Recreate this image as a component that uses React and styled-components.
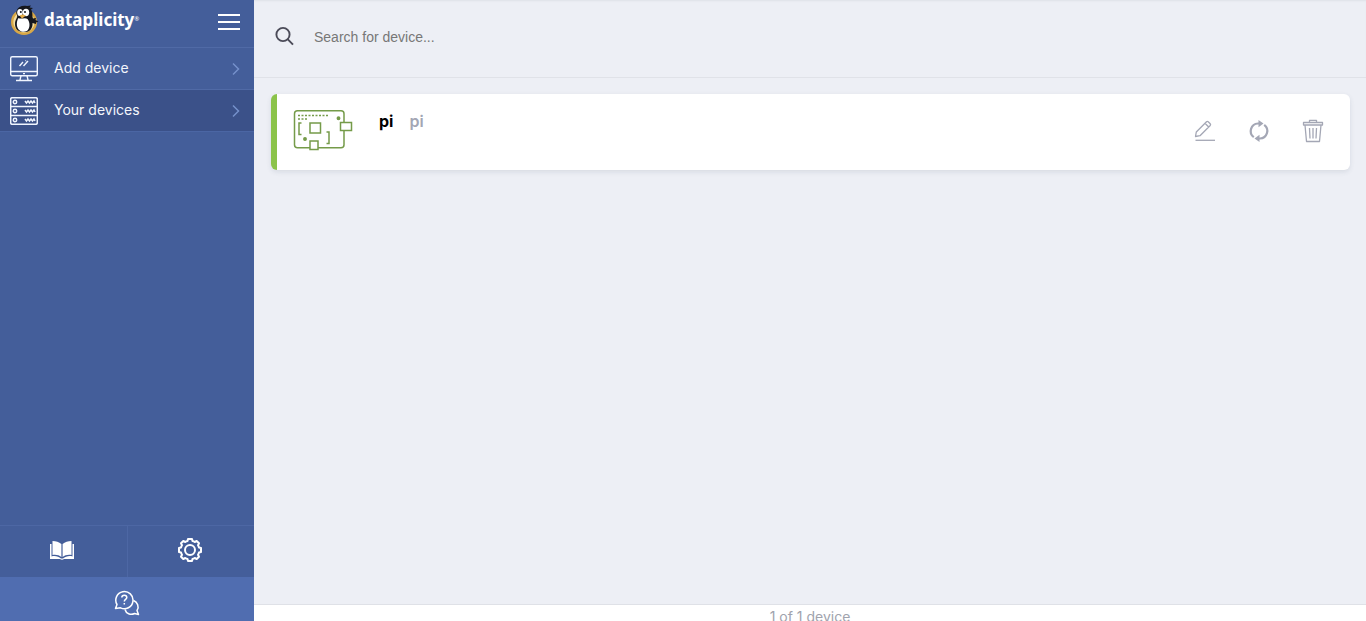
import { useState } from 'react';
import styled, { createGlobalStyle } from 'styled-components';

const GlobalStyle = createGlobalStyle`
  * {
    box-sizing: border-box;
  }
  body {
    margin: 0;
    font-family: Inter, "Liberation Sans", sans-serif;
    background-color: #edeff5;
  }
  button {
    border: 0;
    padding: 0;
    background: none;
    font-family: inherit;
    cursor: pointer;
  }
  svg {
    display: block;
    flex-shrink: 0;
  }
`

const Layout = styled.div`
  display: flex;
  height: 100vh;
  overflow: hidden;
`

const Sidebar = styled.aside`
  display: flex;
  flex-direction: column;
  flex: 0 0 254px;
  background-color: #445e9a;
`

const Brand = styled.div`
  display: flex;
  align-items: flex-start;
  justify-content: space-between;
  height: 47px;
  padding: 4px 14px 0 8px;
`

const Logo = styled.a`
  display: flex;
  align-items: center;
  gap: 4px;
  height: 32px;
  color: #fff;
  font-family: "Noto Sans", "Open Sans", sans-serif;
  font-size: 17px;
  font-weight: 700;
  line-height: 24px;
  text-decoration: none;
`

const Registered = styled.sup`
  font-size: 6px;
  line-height: 6px;
  font-weight: 400;
  vertical-align: 5px;
`

const MenuButton = styled.button`
  height: 36px;
`

const Nav = styled.nav`
  flex: 1;
`

const NavItem = styled.a`
  display: flex;
  align-items: center;
  gap: 16px;
  height: 42px;
  padding: 0 12px 0 10px;
  border-top: 1px solid #506aa6;
  background-color: ${props => props.$active ? '#3b5189' : 'transparent'};
  box-shadow: ${props => props.$active ? '0 1px #4b66a4' : 'none'};
  color: #f3f6fc;
  font-size: 14px;
  line-height: 20px;
  text-decoration: none;
`

const NavLabel = styled.span`
  flex: 1;
  padding-bottom: 2px;
`

const Tools = styled.div`
  display: flex;
  height: 52px;
  border-top: 1px solid #4d67a4;
`

const ToolButton = styled.button`
  display: flex;
  flex: 1;
  align-items: center;
  justify-content: center;
  padding: 0 2px 4px 0;

  & + & {
    border-left: 1px solid #4d67a4;
  }
`

const HelpButton = styled.button`
  display: flex;
  justify-content: center;
  height: 44px;
  padding-top: 13px;
  background-color: #506db0;
`

const Main = styled.main`
  display: flex;
  flex: 1;
  flex-direction: column;
  min-width: 0;
`

const SearchBar = styled.label`
  display: flex;
  align-items: center;
  gap: 20px;
  height: 78px;
  padding: 0 20px 6px;
  border-bottom: 1px solid #e0e2e8;
  box-shadow: inset 0 2px 2px -1px #dfe1e7;
`

const SearchInput = styled.input`
  flex: 1;
  border: 0;
  outline: 0;
  padding: 2px 0 0;
  background: none;
  color: #333;
  font-family: "Liberation Sans", Arial, sans-serif;
  font-size: 14px;

  &::placeholder {
    color: #777;
    opacity: 1;
  }
`

const Devices = styled.ul`
  flex: 1;
  margin: 0;
  padding: 16px 16px 16px 17px;
  list-style: none;
`

const Device = styled.li`
  display: flex;
  align-items: flex-start;
  height: 76px;
  padding: 0 26px 0 16px;
  border-left: 6px solid #8bc34a;
  border-radius: 6px;
  background-color: #fff;
  box-shadow: 0 2px 5px rgba(60, 70, 100, 0.12);
`

const Board = styled.svg`
  margin: 15px 26px 0 0;
`

const DeviceName = styled.a`
  display: flex;
  flex: 1;
  gap: 16px;
  padding-top: 17px;
  color: #000;
  font-size: 16px;
  font-weight: 700;
  line-height: 20px;
  text-decoration: none;
`

const DeviceType = styled.span`
  color: #a3a6b4;
  font-weight: 600;
`

const Actions = styled.div`
  display: flex;
  align-self: center;
  gap: 32px;
  padding-bottom: 2px;
`

const Footer = styled.footer`
  height: 17px;
  border-top: 1px solid #dfe1e7;
  background-color: #fff;
  color: #a0a3ad;
  font-size: 14px;
  line-height: 24px;
  text-align: center;
`

const PenguinIcon = () => (
  <svg width="32" height="32" viewBox="0 0 32 32">
    <circle cx="16" cy="18" r="11.800" fill="#f3dfa5" stroke="#d9a846" strokeWidth="2.400" />
    <path d="M9 6C10 3 14 1 19 2L23 1.500L21.500 3.500L25 4L23 5.500C25 8 24 12 25 14.500L28 14L27.500 16L30.500 17.500L28 18.500L28 20L24.500 19C25 25 21 28.500 16 28C10 28 7 25 7 20C7 15 10 14 9 11C8 9 8 8 9 6Z" fill="#15171d" />
    <path d="M10.500 14C13 15.500 17 13 19.500 15C22 18 22.500 24 19 27C15 29 10 27 9 22C8.500 19 9 16 10.500 14Z" fill="#fff" />
    <ellipse cx="12" cy="8.500" rx="2.800" ry="3.500" fill="#fff" />
    <ellipse cx="18" cy="8.500" rx="3.200" ry="3.700" fill="#fff" />
    <circle cx="12.800" cy="8" r="1" fill="#15171d" />
    <circle cx="17" cy="8" r="1" fill="#15171d" />
    <path d="M11.500 11.500L14.500 10.500L18 11.500L14 14.500Z" fill="#e9b04a" />
  </svg>
)

const BurgerIcon = () => (
  <svg width="22" height="16" viewBox="0 0 22 16" stroke="#fff" strokeWidth="2">
    <path d="M0 1H22M0 8H22M0 15H22" />
  </svg>
)

const MonitorIcon = () => (
  <svg width="28" height="28" viewBox="0 0 28 28" fill="none" stroke="#f0f5ff" strokeWidth="1.400">
    <rect x="0.700" y="1.700" width="26.600" height="19" rx="1.500" />
    <path d="M1 16.500H27M11 20.700L10 25M17 20.700L18 25M6 25.500H22M9.500 11L13 7M13.500 11L18 6M15.500 6L16 5.500" />
    <path d="M13 18.600H15" />
  </svg>
)

const ServerIcon = () => (
  <svg width="28" height="28" viewBox="0 0 28 28" fill="none" stroke="#f0f5ff" strokeWidth="1.500">
    <rect x="0.700" y="0.700" width="26.600" height="26.600" rx="1.500" />
    <path d="M1 9.500H27M1 18.500H27" />
    {[5, 14, 23].map(y => (
      <g key={y}>
        <circle cx="5" cy={y} r="1.700" />
        <path d={`M15 ${y - 1}L16.500 ${y + 1}L18 ${y - 1}L19.500 ${y + 1}L21 ${y - 1}L22.500 ${y + 1}L24 ${y - 1}L25 ${y + 1}`} />
      </g>
    ))}
  </svg>
)

const ChevronIcon = () => (
  <svg width="12" height="14" viewBox="0 0 12 14" fill="none" stroke="#7590cb" strokeWidth="1.500">
    <path d="M3 1.500L8.500 7L3 12.500" />
  </svg>
)

const BookIcon = () => (
  <svg width="26" height="22" viewBox="0 0 26 22">
    <path d="M1 5H2.500V17.500C6 16.500 9.500 17.500 12 19.500H14C16.500 17.500 20 16.500 23.500 17.500V5H25V20H15C14 21 12 21 11 20H1Z" fill="#fff" />
    <path d="M3.500 2C7 2 10 3 12.400 5V18C10 16 7 15.500 3.500 16Z" fill="#fff" />
    <path d="M22.500 2C19 2 16 3 13.600 5V18C16 16 19 15.500 22.500 16Z" fill="#fff" />
  </svg>
)

const GearIcon = () => (
  <svg width="26" height="26" viewBox="0 0 26 26" fill="none" stroke="#fff" strokeWidth="2" strokeLinejoin="round">
    <circle cx="13" cy="13" r="5" />
    <path d="M10.500 4L11 2H15L15.500 4Q16.700 4.300 17.700 5L19.700 4L22 6.300L21 8.300Q21.700 9.300 22 10.500L24 11V15L22 15.500Q21.700 16.700 21 17.700L22 19.700L19.700 22L17.700 21Q16.700 21.700 15.500 22L15 24H11L10.500 22Q9.300 21.700 8.300 21L6.300 22L4 19.700L5 17.700Q4.300 16.700 4 15.500L2 15V11L4 10.500Q4.300 9.300 5 8.300L4 6.300L6.300 4L8.300 5Q9.300 4.300 10.500 4Z" />
  </svg>
)

const HelpIcon = () => (
  <svg width="26" height="26" viewBox="0 0 26 26" fill="none" stroke="#fff" strokeWidth="1.500" strokeLinejoin="round">
    <path d="M1.500 18.500L3 14.500A8.600 8.600 0 1 1 6.500 17.800Z" />
    <path d="M19.500 10.500C23.500 12 25.500 17 23 20.500L24.500 24.500L20.500 23.500C16.500 25.500 12 23.500 11 19.500" />
    <path d="M7.800 7.500C7.800 4.500 12.800 4.500 12.800 7.500C12.800 9.500 10.300 9.300 10.300 11.500M10.300 13V14.600" />
  </svg>
)

const SearchIcon = () => (
  <svg width="20" height="20" viewBox="0 0 20 20" fill="none" stroke="#4b4b58" strokeWidth="1.900">
    <circle cx="9" cy="8.500" r="6.600" />
    <path d="M13.600 13.200L19 18.600" />
  </svg>
)

const BoardIcon = () => (
  <Board width="60" height="42" viewBox="0 0 60 42" fill="none" stroke="#759b49" strokeWidth="1.500">
    <rect x="1.500" y="1.700" width="49.500" height="37" rx="3" />
    <path d="M5 6.500H35M5 10H15" strokeDasharray="2 1.500" strokeWidth="1.300" />
    <rect x="17" y="14" width="10.500" height="10" />
    <path d="M8.500 14H6V25.500H8.500M33.500 23H36V34.500H33.500" />
    <rect x="47.500" y="13.500" width="11" height="8" fill="#fff" />
    <rect x="17" y="32" width="8" height="8.500" fill="#fff" />
    <circle cx="45.500" cy="9.300" r="1.200" fill="#759b49" />
    <circle cx="12" cy="30" r="1.200" fill="#759b49" />
  </Board>
)

const EditIcon = () => (
  <svg width="22" height="22" viewBox="0 0 22 22" fill="none" stroke="#a4a7b5" strokeWidth="1.300" strokeLinejoin="round">
    <path d="M1.500 16.500L2.300 12L12.500 1.800Q13.300 1 14.200 1.800L16.200 3.800Q17 4.600 16.200 5.500L6 15.700ZM11 3.300L14.700 7" />
    <path d="M1.500 20.300H21" />
  </svg>
)

const RefreshIcon = () => (
  <svg width="22" height="22" viewBox="0 0 22 22" fill="none" stroke="#a4a7b5" strokeWidth="2.200">
    <path d="M5.800 17.200A7.600 7.600 0 0 1 10 3.500L12 3.400M16.200 4.800A7.600 7.600 0 0 1 12 18.500L10 18.600" />
    <path d="M10.500 0L15.500 3.600L10.500 7.200ZM11.500 14.800L6.500 18.400L11.500 22Z" fill="#a4a7b5" stroke="none" />
  </svg>
)

const TrashIcon = () => (
  <svg width="22" height="24" viewBox="0 0 22 24" fill="none" stroke="#a4a7b5" strokeWidth="1.300" strokeLinejoin="round">
    <path d="M1.500 3.500H20.500V6H1.500ZM7.500 3.500V1.300H14.500V3.500M3 6L4.500 22.500H17.500L19 6M7.500 9L8 19.500M11 9V19.500M14.500 9L14 19.500" />
  </svg>
)

const devices = [{ id: 1, name: 'pi', type: 'pi' }];

function App() {
  const [search, setSearch] = useState('');

  return (
    <Layout>
      <GlobalStyle />
      <Sidebar>
        <Brand>
          <Logo href='#'>
            <PenguinIcon />
            <span>dataplicity<Registered>®</Registered></span>
          </Logo>
          <MenuButton aria-label='Menu'><BurgerIcon /></MenuButton>
        </Brand>
        <Nav>
          <NavItem href='#add'>
            <MonitorIcon />
            <NavLabel>Add device</NavLabel>
            <ChevronIcon />
          </NavItem>
          <NavItem href='#devices' $active>
            <ServerIcon />
            <NavLabel>Your devices</NavLabel>
            <ChevronIcon />
          </NavItem>
        </Nav>
        <Tools>
          <ToolButton aria-label='Documentation'><BookIcon /></ToolButton>
          <ToolButton aria-label='Settings'><GearIcon /></ToolButton>
        </Tools>
        <HelpButton aria-label='Help'><HelpIcon /></HelpButton>
      </Sidebar>
      <Main>
        <SearchBar>
          <SearchIcon />
          <SearchInput
            aria-label='Search for device'
            placeholder='Search for device...'
            value={search}
            onChange={e => setSearch(e.target.value)}
          />
        </SearchBar>
        <Devices>
          {devices.map(device => (
            <Device key={device.id}>
              <BoardIcon />
              <DeviceName href='#pi'>
                {device.name}
                <DeviceType>{device.type}</DeviceType>
              </DeviceName>
              <Actions>
                <button aria-label='Rename'><EditIcon /></button>
                <button aria-label='Restart'><RefreshIcon /></button>
                <button aria-label='Delete'><TrashIcon /></button>
              </Actions>
            </Device>
          ))}
        </Devices>
        <Footer>1 of 1 device</Footer>
      </Main>
    </Layout>
  );
}

export default App;
